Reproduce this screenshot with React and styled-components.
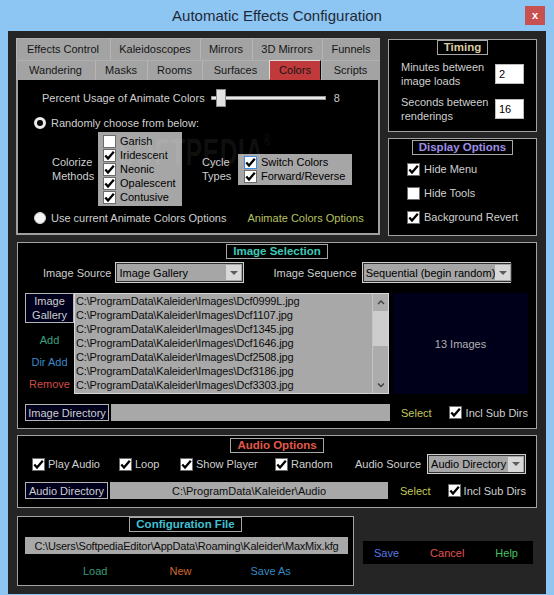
import React from 'react';
import styled, { createGlobalStyle } from 'styled-components';

const GlobalStyle = createGlobalStyle`
  html, body { margin: 0; padding: 0; background: #8dc5f3; }
  body { font-family: "Liberation Sans", Arial, sans-serif; font-size: 11px; }
  * { box-sizing: border-box; }
`;

const Window = styled.div`
  width: 554px;
  height: 595px;
  background: #8dc5f3;
  display: flex;
  flex-direction: column;
  padding: 0 8px 3px 8px;
`;

const TitleBar = styled.div`
  height: 31px;
  flex: none;
  display: grid;
  grid-template-columns: 1fr auto 1fr;
  align-items: center;
`;

const TitleText = styled.div`
  grid-column: 2;
  font-size: 15px;
  color: #1f2a36;
`;

const CloseButton = styled.div`
  grid-column: 3;
  justify-self: end;
  margin-right: 1px;
  width: 20px;
  height: 19px;
  background: #c75050;
  color: #fff;
  font-weight: bold;
  font-size: 11px;
  display: flex;
  align-items: center;
  justify-content: center;
  padding-bottom: 1px;
`;

const Client = styled.div`
  flex: 1;
  background: #252525;
  padding: 7px 9px 8px 8px;
  display: flex;
  flex-direction: column;
`;

const TopRow = styled.div`
  display: flex;
  gap: 8px;
  height: 197px;
  flex: none;
`;

const TabControl = styled.div`
  width: 364px;
  flex: none;
  background: #a0a0a0;
  display: flex;
  flex-direction: column;
`;

const TabRow = styled.div`
  display: flex;
  height: ${p => p.$h}px;
  flex: none;
`;

const Tab = styled.div`
  width: ${p => p.$w}px;
  flex: none;
  display: flex;
  align-items: center;
  justify-content: center;
  color: #161616;
  background: ${p => (p.$active ? '#c0393b' : '#a3a3a3')};
  border-left: 1px solid ${p => (p.$active ? '#dcdcdc' : '#b6b6b6')};
  border-top: 1px solid ${p => (p.$active ? '#dcdcdc' : '#b0b0b0')};
  border-right: 1px solid ${p => (p.$active ? '#000' : '#a3a3a3')};
  border-bottom: 1px solid ${p => (p.$active ? '#c0393b' : '#a3a3a3')};
`;

const TabContent = styled.div`
  flex: 1;
  margin: 0 2px 2px 2px;
  background: #000;
  position: relative;
  display: flex;
  flex-direction: column;
  padding-top: 8px;
  overflow: hidden;
`;

const Watermark = styled.div`
  position: absolute;
  left: 100px;
  top: 52px;
  font-size: 37px;
  font-weight: bold;
  color: rgba(255, 255, 255, 0.08);
  transform: scaleX(0.66);
  transform-origin: left top;
  pointer-events: none;
  z-index: 3;
  letter-spacing: 1px;
  sup { font-size: 14px; vertical-align: top; }
`;

const Light = styled.span`
  color: #cfcfcf;
  white-space: nowrap;
`;

const SliderRow = styled.div`
  display: flex;
  align-items: center;
  height: 20px;
  padding-left: 24px;
`;

const Slider = styled.div`
  position: relative;
  width: 115px;
  height: 20px;
  margin-left: 6px;
  display: flex;
  align-items: center;
`;

const Track = styled.div`
  width: 100%;
  height: 4px;
  background: #e8e8e8;
  border: 1px solid #9a9a9a;
`;

const Thumb = styled.div`
  position: absolute;
  left: 5px;
  top: 1px;
  width: 10px;
  height: 18px;
  background: #e2e2e2;
  border: 1px solid #8a8a8a;
`;

const SliderValue = styled.span`
  margin-left: 8px;
  color: #c8c8c8;
`;

const RadioRow = styled.div`
  display: flex;
  align-items: center;
  gap: 5px;
  height: 16px;
  padding-left: 16px;
  margin-top: ${p => p.$mt}px;
`;

const Radio = styled.div`
  width: 12px;
  height: 12px;
  border-radius: 50%;
  flex: none;
  background: ${p => (p.$on ? '#000' : '#f4f4f4')};
  border: ${p => (p.$on ? '3px solid #ececec' : '1px solid #d0d0d0')};
`;

const OptionsLink = styled.span`
  margin-left: 16px;
  color: #b8c060;
`;

const ColorBlock = styled.div`
  display: flex;
  align-items: center;
  margin-top: 1px;
  padding-left: 34px;
`;

const BlockLabel = styled.div`
  width: ${p => p.$w}px;
  margin-left: ${p => p.$ml || 0}px;
  color: #cfcfcf;
  line-height: 14px;
  flex: none;
`;

const GrayBox = styled.div`
  width: ${p => p.$w}px;
  background: #a6a6a6;
  padding: ${p => p.$pv}px 0 ${p => p.$pv}px ${p => p.$pl}px;
  display: flex;
  flex-direction: column;
  flex: none;
`;

const CheckItem = styled.div`
  display: flex;
  align-items: center;
  gap: ${p => p.$gap || 4}px;
  height: ${p => p.$h || 14}px;
  color: ${p => (p.$dark ? '#000' : '#cfcfcf')};
  white-space: nowrap;
  width: ${p => (p.$w ? `${p.$w}px` : 'auto')};
  margin-left: ${p => p.$ml || 0}px;
  flex: none;
`;

const BoxEl = styled.div`
  width: 13px;
  height: 13px;
  flex: none;
  background: #fff;
  border: 1px solid ${p => (p.$focus ? '#3c8ce6' : '#6c6c6c')};
  display: flex;
  align-items: center;
  justify-content: center;
`;

const Check = ({ on, focus }) => (
  <BoxEl $focus={focus}>
    {on && (
      <svg width="11" height="11" viewBox="0 0 11 11">
        <path d="M1.3 5.6 L4 8.6 L9.8 1.8" fill="none" stroke="#000" strokeWidth="2.3" />
      </svg>
    )}
  </BoxEl>
);

const RightColumn = styled.div`
  width: 149px;
  flex: none;
  margin-top: 1px;
  display: flex;
  flex-direction: column;
  gap: 6px;
`;

const Panel = styled.div`
  border: 1px solid #a2a2a2;
  background: #000;
  display: flex;
  flex-direction: column;
  height: ${p => p.$h}px;
  width: ${p => (p.$w ? `${p.$w}px` : 'auto')};
  margin-left: ${p => p.$ml || 0}px;
  margin-top: ${p => p.$top || 0}px;
  flex: none;
`;

const PanelTitle = styled.div`
  align-self: center;
  margin-top: ${p => p.$mt || 0}px;
  border: 1px solid #a8a8a8;
  height: 15px;
  line-height: 13px;
  padding: 0 6px;
  font-weight: bold;
  font-size: 11.5px;
  color: ${p => p.$color};
  white-space: nowrap;
`;

const TimingRow = styled.div`
  display: flex;
  align-items: center;
  justify-content: space-between;
  padding: 0 12px;
  margin-top: ${p => p.$mt}px;
  height: 28px;
`;

const TwoLine = styled.div`
  color: #cfcfcf;
  line-height: 14px;
`;

const NumInput = styled.div`
  width: 29px;
  height: 20px;
  background: #fff;
  border: 1px solid #bcbcbc;
  color: #000;
  padding-left: 3px;
  display: flex;
  align-items: center;
`;

const CheckList = styled.div`
  display: flex;
  flex-direction: column;
  gap: 8px;
  padding-left: 18px;
  margin-top: 6px;
`;

const SourceRow = styled.div`
  display: flex;
  align-items: center;
  height: 21px;
  margin-top: 3px;
  padding-left: 25px;
`;

const FieldLabel = styled.span`
  color: #cfcfcf;
  margin-left: ${p => p.$ml || 0}px;
  margin-right: ${p => p.$mr || 0}px;
  white-space: nowrap;
  flex: none;
`;

const Dropdown = styled.div`
  width: ${p => p.$w}px;
  height: ${p => p.$h || 21}px;
  flex: none;
  border: 1px solid #cfcfcf;
  display: flex;
`;

const DropInner = styled.div`
  flex: 1;
  border: 1px solid #2e2e2e;
  background: #a6a6a6;
  display: flex;
  align-items: center;
  padding: 0 1px 0 2px;
  color: #000;
  white-space: nowrap;
`;

const DropText = styled.span`
  flex: 1;
  overflow: hidden;
`;

const DropArrow = styled.div`
  width: 15px;
  height: 100%;
  max-height: 15px;
  background: #d8d8d8;
  display: flex;
  align-items: center;
  justify-content: center;
  &::after {
    content: '';
    border-left: 4px solid transparent;
    border-right: 4px solid transparent;
    border-top: 4px solid #5c5c5c;
  }
`;

const Select = ({ w, h, children }) => (
  <Dropdown $w={w} $h={h}>
    <DropInner>
      <DropText>{children}</DropText>
      <DropArrow />
    </DropInner>
  </Dropdown>
);

const ListRow = styled.div`
  display: flex;
  height: 101px;
  margin-top: 10px;
  padding-left: 7px;
  flex: none;
`;

const SideColumn = styled.div`
  width: 49px;
  flex: none;
  display: flex;
  flex-direction: column;
  align-items: center;
`;

const NavyButton = styled.div`
  width: ${p => (p.$w ? `${p.$w}px` : '100%')};
  height: ${p => p.$h}px;
  flex: none;
  background: #00001c;
  border: 1px solid #b4b4b4;
  color: #cfcfcf;
  line-height: 14px;
  text-align: center;
  display: flex;
  flex-direction: column;
  align-items: center;
  justify-content: center;
  white-space: nowrap;
`;

const SideLink = styled.div`
  color: ${p => p.$color};
  height: 14px;
  line-height: 14px;
  margin-top: ${p => p.$mt}px;
`;

const ListBox = styled.div`
  width: 315px;
  flex: none;
  background: #a8a8a8;
  border: 1px solid #d6d6d6;
  display: flex;
`;

const ListLines = styled.div`
  flex: 1;
  padding-left: 1px;
  overflow: hidden;
  color: #0c0c0c;
  line-height: 14px;
  white-space: nowrap;
  letter-spacing: -0.15px;
`;

const ScrollBar = styled.div`
  width: 16px;
  flex: none;
  display: flex;
  flex-direction: column;
  border-left: 1px solid #c4c4c4;
  background: #acacac;
`;

const ScrollArrow = styled.div`
  height: 16px;
  display: flex;
  align-items: center;
  justify-content: center;
`;

const ScrollTrack = styled.div`
  flex: 1;
  padding-top: 1px;
`;

const ScrollThumb = styled.div`
  height: 35px;
  background: #cdcdcd;
`;

const Preview = styled.div`
  width: 135px;
  flex: none;
  margin-left: 4px;
  background: #00001a;
  color: #b0b0b0;
  display: flex;
  align-items: center;
  justify-content: center;
`;

const DirRow = styled.div`
  display: flex;
  align-items: center;
  height: ${p => p.$h}px;
  margin-top: ${p => p.$mt}px;
  padding-left: 7px;
  flex: none;
`;

const PathField = styled.div`
  width: ${p => p.$w}px;
  height: 100%;
  flex: none;
  margin-left: ${p => p.$ml || 0}px;
  background: #a8a8a8;
  color: #0c0c0c;
  display: flex;
  align-items: center;
  justify-content: center;
  white-space: nowrap;
`;

const SelectLink = styled.span`
  color: #c4c858;
  margin-left: ${p => p.$ml}px;
  flex: none;
`;

const AudioRow = styled.div`
  display: flex;
  align-items: center;
  height: 20px;
  margin-top: 1px;
  padding-left: 14px;
  flex: none;
`;

const BottomRow = styled.div`
  display: flex;
  margin-top: 8px;
  flex: none;
`;

const ConfigPath = styled.div`
  height: 17px;
  margin: 5px 5px 0 7px;
  background: #a8a8a8;
  color: #0c0c0c;
  display: flex;
  align-items: center;
  justify-content: center;
  white-space: nowrap;
  letter-spacing: -0.2px;
`;

const LinkRow = styled.div`
  display: flex;
  align-items: center;
  height: 14px;
  margin-top: 10px;
  padding-left: ${p => p.$pl}px;
`;

const Link = styled.span`
  color: ${p => p.$color};
  margin-left: ${p => p.$ml || 0}px;
  white-space: nowrap;
`;

const ActionBox = styled.div`
  width: 170px;
  height: 23px;
  margin-left: 9px;
  margin-top: 25px;
  background: #000;
  display: flex;
  align-items: center;
  padding-left: 11px;
  gap: 31px;
  flex: none;
`;

const Chevron = ({ up }) => (
  <svg width="8" height="6" viewBox="0 0 8 6">
    <path d={up ? 'M1 5 L4 2 L7 5' : 'M1 1.5 L4 4.5 L7 1.5'} fill="none" stroke="#404040" strokeWidth="1.4" />
  </svg>
);

const tabs1 = [
  ['Effects Control', 94],
  ['Kaleidoscopes', 90],
  ['Mirrors', 52],
  ['3D Mirrors', 70],
  ['Funnels', 58],
];
const tabs2 = [
  ['Wandering', 79],
  ['Masks', 52],
  ['Rooms', 55],
  ['Surfaces', 67],
  ['Colors', 52, true],
  ['Scripts', 59],
];

const files = ['Dcf0999L', 'Dcf1107', 'Dcf1345', 'Dcf1646', 'Dcf2508', 'Dcf3186', 'Dcf3303'];

export default function App() {
  return (
    <>
      <GlobalStyle />
      <Window>
        <TitleBar>
          <TitleText>Automatic Effects Configuration</TitleText>
          <CloseButton>x</CloseButton>
        </TitleBar>
        <Client>
          <TopRow>
            <TabControl>
              <TabRow $h={22}>
                {tabs1.map(([t, w]) => (
                  <Tab key={t} $w={w}>{t}</Tab>
                ))}
              </TabRow>
              <TabRow $h={20}>
                {tabs2.map(([t, w, a]) => (
                  <Tab key={t} $w={w} $active={a}>{t}</Tab>
                ))}
              </TabRow>
              <TabContent>
                <Watermark>SOFTPEDIA<sup>®</sup></Watermark>
                <SliderRow>
                  <Light>Percent Usage of Animate Colors</Light>
                  <Slider>
                    <Track />
                    <Thumb />
                  </Slider>
                  <SliderValue>8</SliderValue>
                </SliderRow>
                <RadioRow $mt={7}>
                  <Radio $on />
                  <Light>Randomly choose from below:</Light>
                </RadioRow>
                <ColorBlock>
                  <BlockLabel $w={46}>Colorize<br />Methods</BlockLabel>
                  <GrayBox $w={84} $pv={2} $pl={5}>
                    <CheckItem $dark><Check />Garish</CheckItem>
                    <CheckItem $dark><Check on />Iridescent</CheckItem>
                    <CheckItem $dark><Check on />Neonic</CheckItem>
                    <CheckItem $dark><Check on />Opalescent</CheckItem>
                    <CheckItem $dark><Check on />Contusive</CheckItem>
                  </GrayBox>
                  <BlockLabel $w={36} $ml={20}>Cycle<br />Types</BlockLabel>
                  <GrayBox $w={114} $pv={1.5} $pl={6}>
                    <CheckItem $dark><Check on focus />Switch Colors</CheckItem>
                    <CheckItem $dark><Check on />Forward/Reverse</CheckItem>
                  </GrayBox>
                </ColorBlock>
                <RadioRow $mt={4}>
                  <Radio />
                  <Light>Use current Animate Colors Options</Light>
                  <OptionsLink>Animate Colors Options</OptionsLink>
                </RadioRow>
              </TabContent>
            </TabControl>

            <RightColumn>
              <Panel $h={93}>
                <PanelTitle $color="#dccba2">Timing</PanelTitle>
                <TimingRow $mt={5}>
                  <TwoLine>Minutes between<br />image loads</TwoLine>
                  <NumInput>2</NumInput>
                </TimingRow>
                <TimingRow $mt={7}>
                  <TwoLine>Seconds between<br />renderings</TwoLine>
                  <NumInput>16</NumInput>
                </TimingRow>
              </Panel>
              <Panel $h={98}>
                <PanelTitle $mt={1} $color="#9d8fe6">Display Options</PanelTitle>
                <CheckList>
                  <CheckItem $h={16}><Check on />Hide Menu</CheckItem>
                  <CheckItem $h={16}><Check />Hide Tools</CheckItem>
                  <CheckItem $h={16}><Check on />Background Revert</CheckItem>
                </CheckList>
              </Panel>
            </RightColumn>
          </TopRow>

          <Panel $h={187} $ml={1} $top={7}>
            <PanelTitle $mt={1} $color="#3ec8b6">Image Selection</PanelTitle>
            <SourceRow>
              <FieldLabel $mr={4}>Image Source</FieldLabel>
              <Select w={129}>Image Gallery</Select>
              <FieldLabel $ml={29} $mr={5}>Image Sequence</FieldLabel>
              <Select w={149}>Sequential (begin random)</Select>
            </SourceRow>
            <ListRow>
              <SideColumn>
                <NavyButton $h={30}>Image<br />Gallery</NavyButton>
                <SideLink $mt={10} $color="#3ea07e">Add</SideLink>
                <SideLink $mt={8} $color="#3a88c8">Dir Add</SideLink>
                <SideLink $mt={8} $color="#d24a48">Remove</SideLink>
              </SideColumn>
              <ListBox>
                <ListLines>
                  {files.map(f => (
                    <div key={f}>C:\ProgramData\Kaleider\Images\{f}.jpg</div>
                  ))}
                </ListLines>
                <ScrollBar>
                  <ScrollArrow><Chevron up /></ScrollArrow>
                  <ScrollTrack><ScrollThumb /></ScrollTrack>
                  <ScrollArrow><Chevron /></ScrollArrow>
                </ScrollBar>
              </ListBox>
              <Preview>13 Images</Preview>
            </ListRow>
            <DirRow $h={17} $mt={10}>
              <NavyButton $w={84} $h={17}>Image Directory</NavyButton>
              <PathField $w={279} $ml={2} />
              <SelectLink $ml={11}>Select</SelectLink>
              <CheckItem $ml={17} $gap={4}><Check on />Incl Sub Dirs</CheckItem>
            </DirRow>
          </Panel>

          <Panel $h={73} $ml={1} $top={6}>
            <PanelTitle $mt={2} $color="#e05a4a">Audio Options</PanelTitle>
            <AudioRow>
              <CheckItem $w={87} $gap={3} $h={20}><Check on />Play Audio</CheckItem>
              <CheckItem $w={61} $gap={3} $h={20}><Check on />Loop</CheckItem>
              <CheckItem $w={95} $gap={3} $h={20}><Check on />Show Player</CheckItem>
              <CheckItem $w={80} $gap={3} $h={20}><Check on />Random</CheckItem>
              <FieldLabel $mr={6}>Audio Source</FieldLabel>
              <Select w={99} h={20}>Audio Directory</Select>
            </AudioRow>
            <DirRow $h={17} $mt={8}>
              <NavyButton $w={83} $h={17}>Audio Directory</NavyButton>
              <PathField $w={278} $ml={2}>C:\ProgramData\Kaleider\Audio</PathField>
              <SelectLink $ml={12}>Select</SelectLink>
              <CheckItem $ml={17} $gap={3}><Check on />Incl Sub Dirs</CheckItem>
            </DirRow>
          </Panel>

          <BottomRow>
            <Panel $w={337} $h={70} $ml={1}>
              <PanelTitle $color="#40c0d2">Configuration File</PanelTitle>
              <ConfigPath>C:\Users\SoftpediaEditor\AppData\Roaming\Kaleider\MaxMix.kfg</ConfigPath>
              <LinkRow $pl={65}>
                <Link $color="#3a9a7a">Load</Link>
                <Link $ml={62} $color="#d0692a">New</Link>
                <Link $ml={59} $color="#3a88c0">Save As</Link>
              </LinkRow>
            </Panel>
            <ActionBox>
              <Link $color="#5a78e6">Save</Link>
              <Link $color="#e25050">Cancel</Link>
              <Link $color="#48c060">Help</Link>
            </ActionBox>
          </BottomRow>
        </Client>
      </Window>
    </>
  );
}
